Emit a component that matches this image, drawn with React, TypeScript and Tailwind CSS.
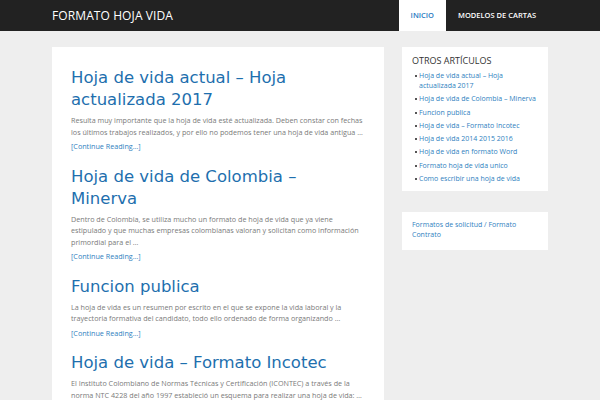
import React from "react";

const posts = [
  {
    title: "Hoja de vida actual – Hoja actualizada 2017",
    excerpt:
      "Resulta muy importante que la hoja de vida esté actualizada. Deben constar con fechas los últimos trabajos realizados, y por ello no podemos tener una hoja de vida antigua …",
  },
  {
    title: "Hoja de vida de Colombia – Minerva",
    excerpt:
      "Dentro de Colombia, se utiliza mucho un formato de hoja de vida que ya viene estipulado  y que muchas empresas colombianas valoran y solicitan como información primordial para el …",
  },
  {
    title: "Funcion publica",
    excerpt:
      "La hoja de vida es un resumen por escrito en el que se expone la vida laboral y la trayectoria formativa del candidato, todo ello ordenado de forma organizando …",
  },
  {
    title: "Hoja de vida – Formato Incotec",
    excerpt:
      "El Instituto Colombiano de Normas Técnicas y Certificación (ICONTEC) a través de la norma NTC 4228 del año 1997 estableció un esquema para realizar una hoja de vida: …",
  },
];

const otros = [
  "Hoja de vida actual – Hoja actualizada 2017",
  "Hoja de vida de Colombia – Minerva",
  "Funcion publica",
  "Hoja de vida – Formato Incotec",
  "Hoja de vida 2014 2015 2016",
  "Hoja de vida en formato Word",
  "Formato hoja de vida unico",
  "Como escribir una hoja de vida",
];

const smallFont = { fontFamily: '"Open Sans", "Noto Sans", sans-serif' };

export default function App() {
  return (
    <div className="min-h-[400px] bg-[#eeeeee]" style={smallFont}>
      <header className="h-[31px] bg-[#222222]">
        <div className="mx-auto flex h-full w-[496px] items-center justify-between">
          <span className="text-[12px] tracking-[0.1px] text-white">FORMATO HOJA VIDA</span>
          <nav className="flex h-full text-[7.5px] font-semibold">
            <a className="flex h-full items-center bg-white px-3 text-[#2a7bbf]">INICIO</a>
            <a className="flex h-full items-center px-3 text-white">MODELOS DE CARTAS</a>
          </nav>
        </div>
      </header>

      <div className="mx-auto flex w-[496px] items-start gap-[18px] pt-4">
        <main className="w-[332px] bg-white px-[19px] pt-5 pb-6">
          {posts.map((p, i) => (
            <article key={i} className={i > 0 ? "mt-[13px]" : ""}>
              <h2
                className="text-[16.5px] leading-[22px] text-[#1e6fae]"
                style={{ fontFamily: '"DejaVu Sans", sans-serif' }}
              >
                {p.title}
              </h2>
              <p className="mt-[4px] text-[7.2px] leading-[11.5px] text-[#7a7a7a]">{p.excerpt}</p>
              <a className="mt-[3px] block text-[7.2px] leading-[11.5px] text-[#2f7fc0]">
                [Continue Reading…]
              </a>
            </article>
          ))}
        </main>

        <aside className="flex w-[146px] flex-col gap-[21px]">
          <section className="bg-white px-[10px] pt-[8px] pb-[4px]">
            <h3 className="text-[9px] leading-[12px] text-[#333333]">OTROS ARTÍCULOS</h3>
            <ul className="mt-[4px] pl-[7px]">
              {otros.map((o) => (
                <li key={o} className="relative mb-[3.3px] text-[7px] leading-[10px] text-[#2f7fc0]">
                  <span className="absolute top-[4px] left-[-4px] h-[2px] w-[2px] bg-[#555555]" />
                  {o}
                </li>
              ))}
            </ul>
          </section>
          <section className="bg-white px-[10px] pt-[8px] pb-[10px]">
            <a className="block text-[7px] leading-[10px] text-[#2f7fc0]">
              Formatos de solicitud / Formato Contrato
            </a>
          </section>
        </aside>
      </div>
    </div>
  );
}
